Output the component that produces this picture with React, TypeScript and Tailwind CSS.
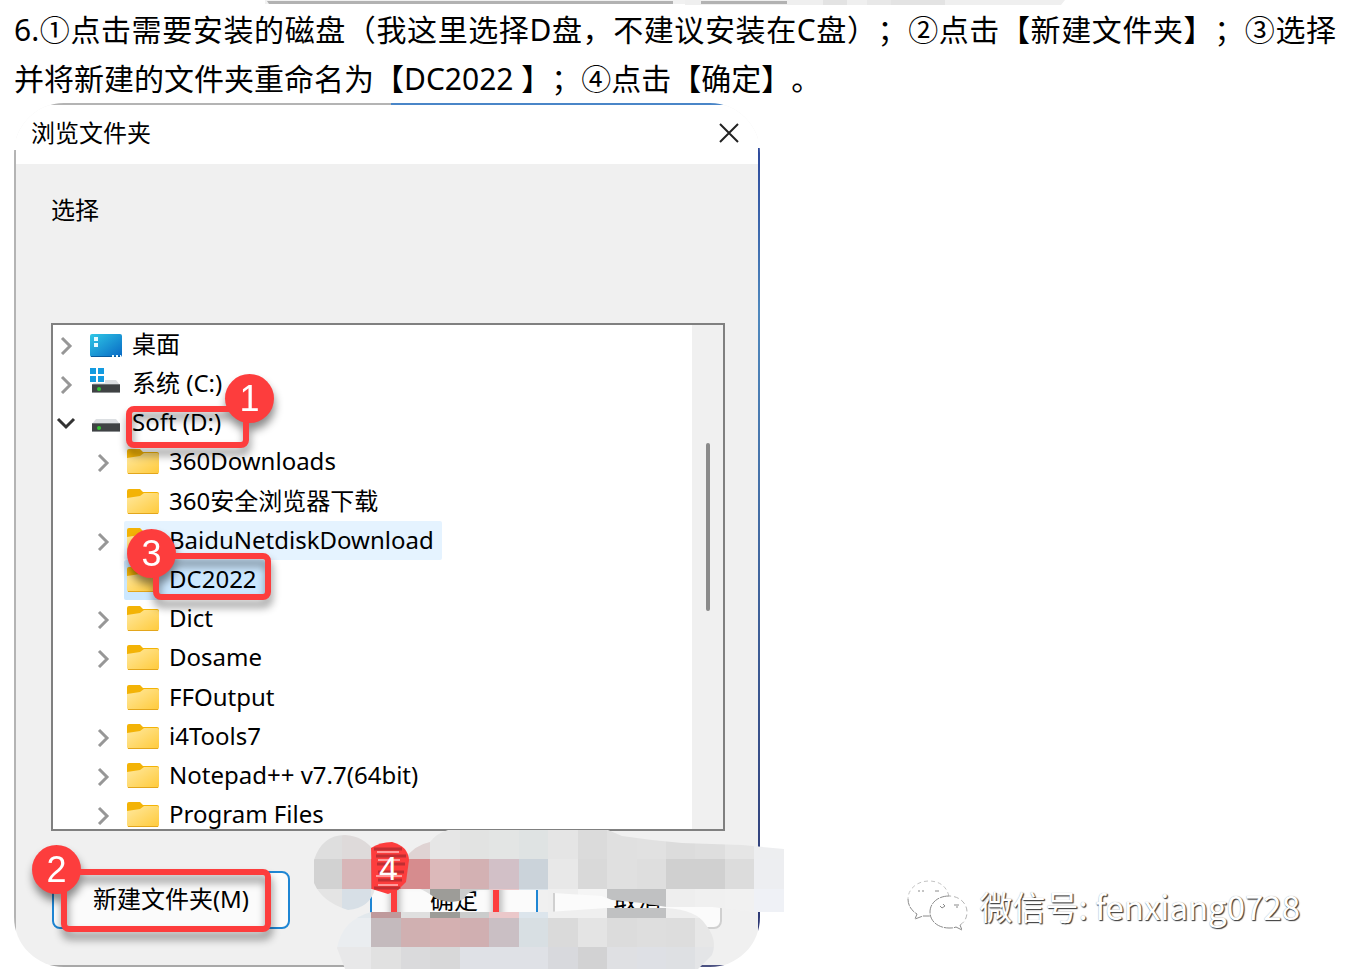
import React from 'react';
import clsx from 'clsx';

type IconKind = 'desktop' | 'system' | 'drive' | 'folder';

interface MarkerProps {
  label: string;
  ring: string;
  badge: string;
}

interface TreeRow {
  name: string;
  icon: IconKind;
  level: 0 | 1;
  state?: 'open' | 'closed';
  highlight?: string;
  marker?: MarkerProps;
}

const ROWS: TreeRow[] = [
  { name: '桌面', icon: 'desktop', level: 0, state: 'closed' },
  { name: '系统 (C:)', icon: 'system', level: 0, state: 'closed' },
  {
    name: 'Soft (D:)',
    icon: 'drive',
    level: 0,
    state: 'open',
    marker: { label: '1', ring: 'left-[39px] top-[3px] w-[123px] h-[42px]', badge: 'left-[99px] -top-[32px]' },
  },
  { name: '360Downloads', icon: 'folder', level: 1, state: 'closed' },
  { name: '360安全浏览器下载', icon: 'folder', level: 1 },
  { name: 'BaiduNetdiskDownload', icon: 'folder', level: 1, state: 'closed', highlight: 'bg-[#e5f3ff]' },
  {
    name: 'DC2022',
    icon: 'folder',
    level: 1,
    highlight: 'bg-[#cce8ff]',
    marker: { label: '3', ring: 'left-[29px] -top-[7px] w-[118px] h-[47px]', badge: '-left-[26px] -top-[24px]' },
  },
  { name: 'Dict', icon: 'folder', level: 1, state: 'closed' },
  { name: 'Dosame', icon: 'folder', level: 1, state: 'closed' },
  { name: 'FFOutput', icon: 'folder', level: 1 },
  { name: 'i4Tools7', icon: 'folder', level: 1, state: 'closed' },
  { name: 'Notepad++ v7.7(64bit)', icon: 'folder', level: 1, state: 'closed' },
  { name: 'Program Files', icon: 'folder', level: 1, state: 'closed' },
];

// column edges and colours of the pixelated smear over the footer
const COLS = [0, 30, 59, 89, 118, 148, 177, 207, 236, 266, 295, 325, 354, 383, 413, 442, 472];
const LINES = [0, 29, 59, 88, 117, 139];
const UPPER = [
  ['#dedede', '#dedada', '#dedada', '#dfd3d3', '#e6e6e6', '#e2e3e2', '#e3e5e4', '#dfe3e3', '#e5e5e5', '#dbdbdb', '#e0e0e0', '#e1e1e1', '#dcdcdc', '#dedede', '#e5e5e5', '#edeef0'],
  ['#d2d2d2', '#d8b6b8', '#d06c6e', '#d68c8e', '#dcb9ba', '#d3b1b3', '#d2c0c7', '#cbd3da', '#e8e8e8', '#d9d9d9', '#e0e0e0', '#dedede', '#d0d0d0', '#d0d0d0', '#dcdcdc', '#edeef1'],
  ['#e4e4e4', '#d7dfe6', '#e6e6e6', '#dfdfdf', '#9d9c98', '#cbcccc', '#ebc8ca', '#dce5ec', '#efefef', '#f5f5f5', '#c0c1c2', '#c0c1c2', '#eeeeee', '#f0f0f0', '#f1f1f1', '#eff1f6'],
];
const LOWER = [
  ['#eaedf0', '#e2e8ec', '#bf9a9c', '#dfdfdf', '#9d9c98', '#cbcccc', '#ebc8ca', '#dce5ec', '#efefef', '#efefef', '#c0c1c2', '#c0c1c2', '#eeeeee', '#eeeeee', '#f1f1f1', '#f1f1f1'],
  ['#eaedf0', '#eaedf0', '#c4babd', '#d0b0b1', '#d4b0b1', '#d0afb1', '#cabfc4', '#d8dfe3', '#dadada', '#e4e4e4', '#dcdcdc', '#dedede', '#dddddd', '#e7e7e7', '#e7e7e7', '#e7e7e7'],
  ['#e8e8e9', '#e8e8e9', '#e1e1e1', '#dadadc', '#d8d8d9', '#dfe1e6', '#dfe1e6', '#dfe1e6', '#d8d9dd', '#d2d2d3', '#dfe0e3', '#dee0e5', '#dee0e3', '#e4e5e7', '#e4e5e7', '#e4e5e7'],
];

function Cells({ rows, first }: { rows: string[][]; first: number }) {
  return (
    <>
      {rows.map((row, r) =>
        row.map((fill, c) => (
          <rect
            key={`${r}-${c}`}
            x={COLS[c]}
            y={LINES[first + r]}
            width={COLS[c + 1] - COLS[c]}
            height={LINES[first + r + 1] - LINES[first + r]}
            fill={fill}
          />
        ))
      )}
    </>
  );
}

function Mosaic() {
  return (
    <svg
      className="pointer-events-none absolute left-[298px] -bottom-[2px] z-20 h-[139px] w-[472px]"
      viewBox="0 0 472 139"
      shapeRendering="crispEdges"
      aria-hidden="true"
    >
      <defs>
        <clipPath id="smear-upper">
          <path d="M2 30Q10 5 33 5Q52 6 63 22L92 30Q102 15 118 12Q125 3 136 0H296L310 6L340 10L370 13L430 15L472 19V82H442L400 77L355 77L330 73L300 70L290 66L241 63V82H236V60H167Q155 61 152 69Q140 75 125 69Q112 60 108 59H63Q58 78 36 80Q10 72 2 53Z" />
        </clipPath>
        <clipPath id="smear-lower">
          <path d="M25 118Q30 90 59 82H236L295 78H354Q385 80 394 95Q406 110 400 125L386 139H33Z" />
        </clipPath>
        <clipPath id="badge-four">
          <path d="M59 18Q68 12 80 12Q96 16 97 30L94 52L86 60L76 64L60 59Z" />
        </clipPath>
      </defs>
      <g clipPath="url(#smear-upper)">
        <Cells rows={UPPER} first={0} />
      </g>
      <g clipPath="url(#smear-lower)">
        <Cells rows={LOWER} first={2} />
      </g>
      <g clipPath="url(#badge-four)" shapeRendering="auto">
        <rect x="59" y="10" width="40" height="56" fill="#fd3d3d" />
        <path d="M62 19h28M64 26h30M65 34h28M66 42h26M66 50h24M62 58h26" stroke="#c02e32" strokeWidth="3" />
        <path d="M65 22h22M66 30h22M64 46h26M66 55h20" stroke="#ff9c9c" strokeWidth="2" />
        <text x="67" y="50" fill="#fff" fontSize="34" fontFamily="'Liberation Sans', Arial, sans-serif">
          4
        </text>
      </g>
    </svg>
  );
}

function Chevron({ state }: { state?: 'open' | 'closed' }) {
  if (!state) return null;
  return (
    <svg className="h-[20px] w-[20px]" viewBox="0 0 20 20" fill="none" aria-hidden="true">
      {state === 'open' ? (
        <path d="M2 6L10 14L18 6" stroke="#333" strokeWidth="3" />
      ) : (
        <path d="M6 3L14 11L6 19" stroke="#979797" strokeWidth="3" />
      )}
    </svg>
  );
}

function TreeIcon({ kind }: { kind: IconKind }) {
  return (
    <svg className="h-[32px] w-[32px] flex-none" viewBox="0 0 32 32" aria-hidden="true">
      {kind === 'desktop' && (
        <>
          <rect y="5" width="32" height="23" rx="2" fill="url(#desk)" />
          <path d="M1 27h30v1h-30z" fill="#075a9c" />
          <path d="M4 8h4v4H4zM4 14h4v4H4zM22 26h2v2h-2zM26 26h2v2h-2zM30 26h1v2h-1z" fill="#e8fbff" />
        </>
      )}
      {(kind === 'system' || kind === 'drive') && (
        <>
          <path d="M6 12H26L30 17H2Z" fill="#dcdfe2" />
          <rect x="2" y="16" width="28" height="9" fill="#3f4244" />
          <path d="M2 24h28v1H2z" fill="#8d9092" />
          <path d="M2 16h28v1H2z" fill="#707476" />
          <circle cx="9" cy="21" r="2" fill="#35c335" />
        </>
      )}
      {kind === 'system' && (
        <>
          <path d="M0 0h15v15H0z" fill="#fff" />
          <path d="M0 0h6v6H0zM8 0h6v6H8zM0 8h6v6H0zM8 8h6v6H8z" fill="#149be0" />
        </>
      )}
      {kind === 'folder' && (
        <>
          <path d="M0 5Q0 3 2 3H13L16 6H30Q32 6 32 8V13H0Z" fill="#f3b306" />
          <path d="M0 12L13 10L17 7H30Q32 7 32 9V26Q32 28 30 28H2Q0 28 0 26Z" fill="url(#fold)" />
          <path d="M1 27.5H31" stroke="#e3a61c" strokeWidth="1" />
        </>
      )}
    </svg>
  );
}

function Marker({ label, ring, badge }: MarkerProps) {
  return (
    <span
      className={clsx(
        'pointer-events-none absolute z-10 rounded-[8px] border-[6px] border-[#fd3d3d] drop-shadow-[1px_7px_4px_rgba(0,0,0,0.45)]',
        ring
      )}
    >
      <span
        className={clsx(
          "absolute -m-[6px] flex h-[49px] w-[49px] items-center justify-center rounded-full bg-[#fd3d3d] font-['Liberation_Sans',Arial,sans-serif] text-[36px] leading-none text-white",
          badge
        )}
      >
        {label}
      </span>
    </span>
  );
}

function FolderTree() {
  return (
    <div className="flex h-[508px] overflow-hidden border-2 border-[#808080] bg-white">
      <ul className="flex h-[510px] flex-1 flex-col">
        {ROWS.map((row) => (
          <li key={row.name} className={clsx('flex flex-1', row.level === 1 && 'pl-[37px]')}>
            <div className="flex w-[34px] items-center pl-[3px]">
              <Chevron state={row.state} />
            </div>
            <div className={clsx('relative flex items-center gap-[10px] rounded-[2px] pr-2 pl-[3px]', row.highlight)}>
              <TreeIcon kind={row.icon} />
              <span className="pb-[2px] leading-[32px] whitespace-nowrap">{row.name}</span>
              {row.marker && <Marker {...row.marker} />}
            </div>
          </li>
        ))}
      </ul>
      <div className="w-[31px] bg-[#f0f0f0] pt-[118px]">
        <div className="mx-auto h-[168px] w-[4px] rounded-full bg-[#8a8a8a]" />
      </div>
    </div>
  );
}

function BrowseDialog() {
  return (
    <section className="relative w-[746px] flex-none font-['Noto_Sans','Noto_Sans_CJK_SC',sans-serif] text-[24px] text-black">
      <div className="flex overflow-hidden rounded-[50px]">
        <div className="mt-[47px] w-[2px] bg-[#b4b4b4]" />
        <div className="flex-1 bg-[#f0f0f0]">
          <div className="flex h-[2px]">
            <div className="w-[375px] bg-[#b4b4b4]" />
            <div className="flex-1 bg-[#4a86c8]" />
          </div>
          <header className="flex h-[59px] items-center justify-between bg-white pr-[19px] pb-[3px] pl-[15px]">
            <h2>浏览文件夹</h2>
            <button type="button" aria-label="关闭">
              <svg className="h-[20px] w-[20px]" viewBox="0 0 20 20" fill="none">
                <path d="M1 1L19 19M19 1L1 19" stroke="#222" strokeWidth="2" />
              </svg>
            </button>
          </header>
          <div className="pr-[33px] pl-[35px]">
            <p className="h-[159px] pt-[28px] leading-[36px]">选择</p>
            <FolderTree />
            <footer className="flex pt-[40px] pb-[36px] pl-[1px]">
              <div className="relative mr-[80px]">
                <button type="button" className="h-[58px] w-[238px] rounded-[8px] border-2 border-[#1f86d4] bg-[#fbfbfb] pb-[2px]">
                  新建文件夹(M)
                </button>
                <Marker label="2" ring="left-[9px] -top-[2px] w-[210px] h-[63px]" badge="-left-[29px] -top-[24px]" />
              </div>
              <div className="relative mr-[15px]">
                <button type="button" className="h-[58px] w-[168px] rounded-[8px] border-2 border-[#1f86d4] bg-[#fbfbfb]">
                  确定
                </button>
                <span className="pointer-events-none absolute -top-[2px] left-[21px] h-[63px] w-[108px] rounded-[8px] border-[6px] border-[#fd3d3d] drop-shadow-[1px_7px_4px_rgba(0,0,0,0.45)]" />
              </div>
              <button type="button" className="h-[58px] w-[169px] flex-none rounded-[8px] border-2 border-[#d0d0d0] bg-[#fbfbfb]">
                取消
              </button>
            </footer>
          </div>
          <div className="flex h-[2px] justify-between">
            <div className="w-[330px] bg-[#a8a8a8]" />
            <div className="w-[62px] bg-[#4c5282]" />
          </div>
        </div>
        <div className="mt-[45px] w-[2px] bg-linear-to-b from-[#2f4a9c] via-[#4f88bd] via-20% to-[#2c3470]" />
      </div>
      <Mosaic />
    </section>
  );
}

function Watermark() {
  return (
    <div className="mb-[34px] flex items-center gap-[12px]">
      <svg className="h-[54px] w-[62px]" viewBox="0 0 62 54" fill="none" stroke="#8a8a8a" aria-hidden="true">
        <path d="M43 17C40 6 32 2 23 2C11 2 2 10 2 20" stroke="#c4c4c4" strokeDasharray="4 3" />
        <path d="M2 20C2 27 6 32 11 35L9 40L17 37H24" strokeDasharray="7 1" />
        <path d="M43 17C32 17 24 24 24 33C24 43 33 49 43 49C46 49 48 49 50 48L56 51L54 46" strokeDasharray="9 1" />
        <path d="M54 46C59 43 61 38 61 33C61 24 53 17 43 17" stroke="#b4b4b4" strokeDasharray="5 3" />
        <path d="M13 11v2M17 11v2M29 12h4M34 27L36 29L39 27L37 25M48 26h5M50 28h2" strokeWidth="1" />
      </svg>
      <span className="font-['Noto_Sans_CJK_SC',sans-serif] text-[33px] leading-[48px] whitespace-nowrap text-white [text-shadow:1px_1px_1px_#444,1px_1px_1px_#777,0_0_1px_#aaa]">
        微信号: fenxiang0728
      </span>
    </div>
  );
}

export default function App() {
  return (
    <main className="min-h-screen bg-white">
      <svg className="ml-[265px] block h-[5px] w-[802px]" viewBox="0 0 802 5" aria-hidden="true">
        <path d="M0 0H420V4H0z" fill="#f1f1f1" />
        <path d="M420 0H602V5H420zM680 0H800L796 5H680z" fill="#efefef" />
        <path d="M558 0H582V5H558zM626 0H680V5H626z" fill="#e3e3e3" />
        <path d="M602 0H626V5H602z" fill="#e8e8e8" />
        <path d="M2 1H408V4H4zM436 1H522V4H436z" fill="#b2b2b2" />
      </svg>

      <p className="pr-[13px] pl-[14px] text-justify font-['Noto_Sans','Noto_Sans_CJK_SC',sans-serif] text-[30px] leading-[49px] text-black [text-spacing-trim:space-all]">
        6.①点击需要安装的磁盘（我这里选择D盘，不建议安装在C盘）；②点击【新建文件夹】；③选择并将新建的文件夹重命名为【DC2022 】；④点击【确定】。
      </p>

      <div className="flex items-end justify-between pr-[49px] pl-[14px]">
        <BrowseDialog />
        <Watermark />
      </div>

      {/* gradients shared by the tree icons */}
      <svg className="absolute h-0 w-0" aria-hidden="true">
        <defs>
          <linearGradient id="desk" x1="0" y1="0" x2="1" y2="1">
            <stop offset="0" stopColor="#2fc8e6" />
            <stop offset="1" stopColor="#0868c4" />
          </linearGradient>
          <linearGradient id="fold" x1="0" y1="0" x2="1" y2="1">
            <stop offset="0" stopColor="#ffe9a0" />
            <stop offset="1" stopColor="#ffca3a" />
          </linearGradient>
        </defs>
      </svg>
    </main>
  );
}
